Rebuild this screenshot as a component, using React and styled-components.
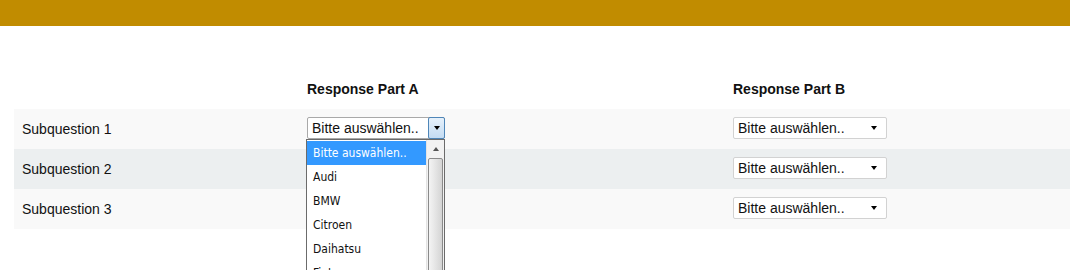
import React from 'react';
import styled, { createGlobalStyle } from 'styled-components';

const GlobalStyle = createGlobalStyle`
  html, body {
    height: 100%;
  }
  body {
    margin: 0;
    padding: 0;
    overflow: hidden;
    background: #fff;
    font-family: "Liberation Sans", Arial, sans-serif;
    color: #111;
  }
`;

const TopBar = styled.div`
  height: 26px;
  background: #c18c00;
`;

const Table = styled.div`
  margin: 43px 0 0 14px;
  display: grid;
  grid-template-columns: 293px 426px 1fr;
`;

const Row = styled.div`
  display: contents;
`;

const Cell = styled.div`
  height: 40px;
  display: flex;
  align-items: center;
  font-size: 14px;
  background: ${(p) => (p.$tone === 'odd' ? '#f9f9f9' : p.$tone === 'even' ? '#eceff0' : 'transparent')};
  padding-left: ${(p) => (p.$label ? '8px' : '0')};
  position: relative;
`;

const HeadText = styled.span`
  font-weight: bold;
  font-size: 14px;
`;

const SelectBox = styled.div`
  box-sizing: border-box;
  width: ${(p) => p.$width}px;
  height: 22px;
  display: flex;
  align-items: center;
  background: #fff;
  border: 1px solid ${(p) => (p.$open ? '#a9a9a9' : '#d2d2d2')};
  border-radius: 2px;
  font-size: 14px;
  margin-top: -2px;
`;

const SelectText = styled.span`
  flex: 1;
  padding-left: 4px;
  white-space: nowrap;
  overflow: hidden;
`;

const ArrowButton = styled.div`
  box-sizing: border-box;
  width: 17px;
  height: 22px;
  margin: -1px -1px -1px 0;
  display: flex;
  align-items: center;
  justify-content: center;
  border: ${(p) => (p.$open ? '1px solid #4f86b8' : 'none')};
  border-radius: 2px;
  background: ${(p) => (p.$open ? 'linear-gradient(#e6f1fb, #c4dcf3)' : 'transparent')};
  margin-right: ${(p) => (p.$open ? '-1px' : '4px')};
`;

const Caret = styled.span`
  width: 0;
  height: 0;
  border-left: 3.5px solid transparent;
  border-right: 3.5px solid transparent;
  border-${(p) => (p.$up ? 'bottom' : 'top')}: 4px solid ${(p) => p.$color || '#000'};
`;

const DropList = styled.div`
  position: absolute;
  top: 30px;
  left: -1px;
  width: 139px;
  height: 134px;
  box-sizing: border-box;
  border: 1px solid #6b6b6b;
  background: #fff;
  display: flex;
  overflow: hidden;
  z-index: 10;
`;

const Options = styled.div`
  flex: 1;
  padding-top: 1px;
`;

const Option = styled.div`
  height: 24px;
  display: flex;
  align-items: center;
  padding-left: 6px;
  font-family: "DejaVu Sans Condensed", "DejaVu Sans", sans-serif;
  font-size: 12px;
  color: ${(p) => (p.$active ? '#fff' : '#111')};
  background: ${(p) => (p.$active ? '#3399ff' : 'transparent')};
  white-space: nowrap;
`;

const ScrollTrack = styled.div`
  width: 17px;
  border-left: 1px solid #e3e3e3;
  background: #f2f2f2;
  display: flex;
  flex-direction: column;
`;

const ScrollUp = styled.div`
  height: 17px;
  flex: none;
  display: flex;
  align-items: center;
  justify-content: center;
`;

const Thumb = styled.div`
  flex: 1;
  margin: 1px 1px 0 1px;
  border: 1px solid #8a8a8a;
  border-radius: 2px;
  background: linear-gradient(90deg, #f4f4f4, #e6e6e6 45%, #d4d4d4);
`;

const options = ['Bitte auswählen..', 'Audi', 'BMW', 'Citroen', 'Daihatsu', 'Fiat'];

const Select = ({ width, open }) => (
  <SelectBox $width={width} $open={open}>
    <SelectText>Bitte auswählen..</SelectText>
    <ArrowButton $open={open}>
      <Caret />
    </ArrowButton>
  </SelectBox>
);

const rows = ['Subquestion 1', 'Subquestion 2', 'Subquestion 3'];

const App = () => (
  <>
    <GlobalStyle />
    <TopBar />
    <Table>
      <Row>
        <Cell />
        <Cell>
          <HeadText>Response Part A</HeadText>
        </Cell>
        <Cell>
          <HeadText>Response Part B</HeadText>
        </Cell>
      </Row>
      {rows.map((label, i) => {
        const tone = i % 2 === 0 ? 'odd' : 'even';
        return (
          <Row key={label}>
            <Cell $tone={tone} $label>
              {label}
            </Cell>
            <Cell $tone={tone}>
              <Select width={138} open={i === 0} />
              {i === 0 && (
                <DropList>
                  <Options>
                    {options.map((o, j) => (
                      <Option key={o} $active={j === 0}>
                        {o}
                      </Option>
                    ))}
                  </Options>
                  <ScrollTrack>
                    <ScrollUp>
                      <Caret $up $color="#555" />
                    </ScrollUp>
                    <Thumb />
                  </ScrollTrack>
                </DropList>
              )}
            </Cell>
            <Cell $tone={tone}>
              <Select width={154} />
            </Cell>
          </Row>
        );
      })}
    </Table>
  </>
);

export default App;
